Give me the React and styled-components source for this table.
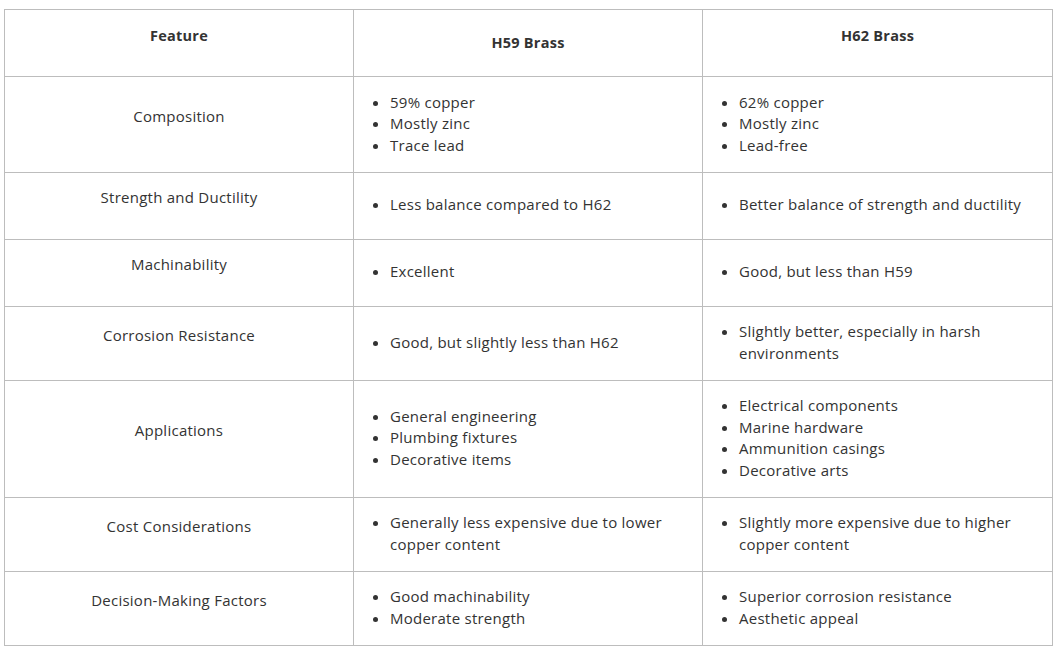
import React from "react";
import styled, { createGlobalStyle } from "styled-components";

const Global = createGlobalStyle`
  html, body { margin: 0; padding: 0; background: #fff; }
  body { font-family: "Open Sans", "Liberation Sans", sans-serif; color: #333; }
`;

const Page = styled.div`
  padding: 9px 7px 0 4px;
`;

const Table = styled.table`
  width: 1048px;
  border-collapse: collapse;
  table-layout: fixed;
  font-size: 15px;
  line-height: 21.5px;
  letter-spacing: 0.25px;
`;

const Cell = styled.td`
  border: 1px solid #bdbdbd;
  padding: 14.5px 15px ${(p) => (p.$lift ? "30px" : "15.5px")};
  vertical-align: middle;
  text-align: ${(p) => (p.$center ? "center" : "left")};
  color: #333;
  font-weight: ${(p) => (p.$head ? 700 : 400)};
  font-size: ${(p) => (p.$head ? "14.5px" : "15px")};
`;

const List = styled.ul`
  margin: 0;
  padding-left: 21px;
  li { padding-left: 0; }
`;

const rows = [
  ["Composition", ["59% copper", "Mostly zinc", "Trace lead"], ["62% copper", "Mostly zinc", "Lead-free"]],
  ["Strength and Ductility", ["Less balance compared to H62"], ["Better balance of strength and ductility"]],
  ["Machinability", ["Excellent"], ["Good, but less than H59"]],
  ["Corrosion Resistance", ["Good, but slightly less than H62"], ["Slightly better, especially in harsh environments"]],
  ["Applications", ["General engineering", "Plumbing fixtures", "Decorative items"], ["Electrical components", "Marine hardware", "Ammunition casings", "Decorative arts"]],
  ["Cost Considerations", ["Generally less expensive due to lower copper content"], ["Slightly more expensive due to higher copper content"]],
  ["Decision-Making Factors", ["Good machinability", "Moderate strength"], ["Superior corrosion resistance", "Aesthetic appeal"]],
];

export default function App() {
  return (
    <Page>
      <Global />
      <Table>
        <colgroup>
          <col style={{ width: "349px" }} />
          <col style={{ width: "349px" }} />
          <col style={{ width: "350px" }} />
        </colgroup>
        <thead>
          <tr>
            <Cell as="th" $head $center $lift>Feature</Cell>
            <Cell as="th" $head $center>H59 Brass</Cell>
            <Cell as="th" $head $center $lift>H62 Brass</Cell>
          </tr>
        </thead>
        <tbody>
          {rows.map(([f, a, b]) => (
            <tr key={f}>
              <Cell $center $lift>{f}</Cell>
              <Cell>
                <List>{a.map((t) => <li key={t}>{t}</li>)}</List>
              </Cell>
              <Cell>
                <List>{b.map((t) => <li key={t}>{t}</li>)}</List>
              </Cell>
            </tr>
          ))}
        </tbody>
      </Table>
    </Page>
  );
}
